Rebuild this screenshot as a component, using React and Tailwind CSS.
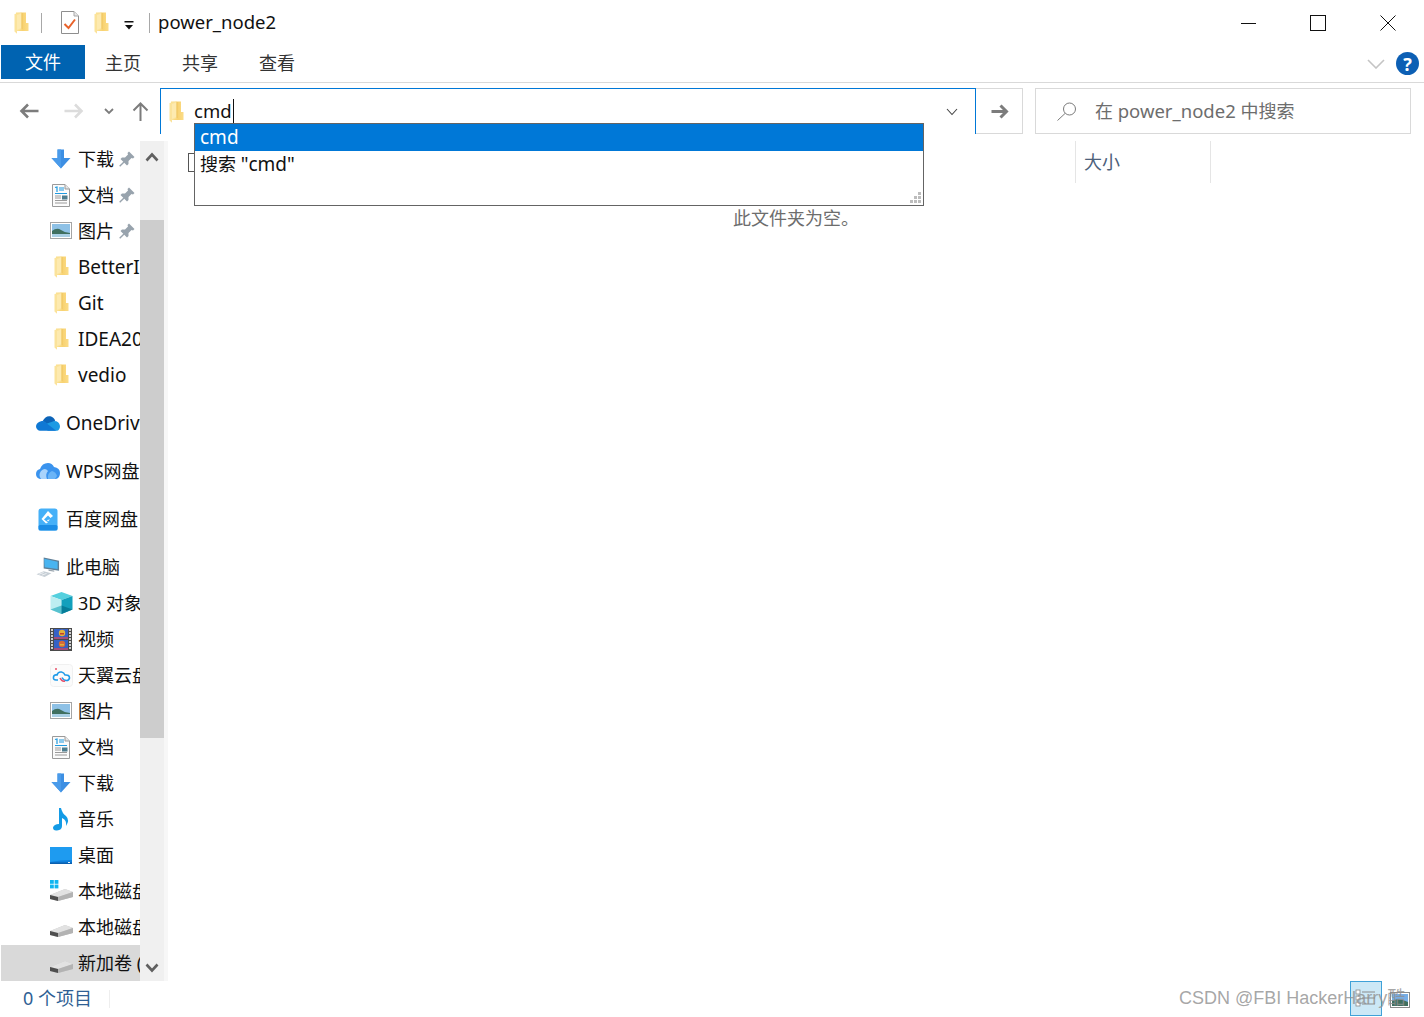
import React from "react";

const Folder = ({ id = "f" }) => (
  <svg width="15" height="22" viewBox="0 0 15 22">
    <defs>
      <linearGradient id={id} x1="0" x2="1" y1="0" y2="0">
        <stop offset="0" stopColor="#fbe08f" />
        <stop offset="0.55" stopColor="#f8d271" />
        <stop offset="1" stopColor="#fbdc88" />
      </linearGradient>
    </defs>
    <path d="M2 0.5 H12 V11 H14.5 V19 H2 Z" fill={`url(#${id})`} />
    <path d="M0.5 2 L8 0.5 V17 L3 19 V21.8 L0.5 19.5 Z" fill="#fbe39b" />
    <path d="M3 3 L7 1.5 V16 L3 18 Z" fill="#fdeab0" />
    <path d="M8 1 V17" stroke="#edc35e" strokeWidth="1" />
  </svg>
);

const Down = () => (
  <svg width="20" height="20" viewBox="0 0 20 20">
    <path d="M6.5 0.5 H13 V9 H19.5 L10 19.5 L0.5 9 H6.5 Z" fill="#3d8fe3" />
    <path d="M6.5 0.5 H10 V19.5 L0.5 9 H6.5 Z" fill="#4a9bea" />
  </svg>
);
const Doc = () => (
  <svg width="18" height="23" viewBox="0 0 18 23">
    <path d="M.5.5 H13 L17.5 5 V22.5 H.5 Z" fill="#fbfbfb" stroke="#9a9a9a" />
    <path d="M13 .5 V5 H17.5" fill="#e6e6e6" stroke="#9a9a9a" />
    <path d="M3 3.5 L5 3 V8 M7 4 H12 M7 6 H12 M3 9.5 H15" stroke="#1f9ae0" strokeWidth="1.2" fill="none" />
    <path d="M3 12 H9 M3 14 H9 M3 16.5 H15 M3 19 H15" stroke="#9a9a9a" fill="none" />
    <rect x="10" y="11.5" width="5.5" height="4" fill="#4e7d8e" />
  </svg>
);
const Pic = () => (
  <svg width="22" height="18" viewBox="0 0 22 18">
    <rect x=".5" y=".5" width="21" height="16" fill="#fff" stroke="#a5a5a5" />
    <rect x="2" y="2" width="18" height="13" fill="#8ec1e6" />
    <path d="M2 9 Q7 5 11 8 Q15 11 20 11 V15 H2 Z" fill="#3f6f5f" />
    <path d="M2 12 H20 V15 H2 Z" fill="#a9cfe4" />
  </svg>
);
const Pin = () => (
  <svg width="16" height="16" viewBox="0 0 16 16">
    <path d="M10 0.5 L15.5 6 L14 7.5 L12.5 7 L9.5 10 L9.5 13 L8 14.5 L1.5 8 L3 6.5 L6 6.5 L9 3.5 L8.5 2 Z" fill="#98a3ad" />
    <path d="M5 11 L0.7 15.3" stroke="#98a3ad" strokeWidth="1.4" />
  </svg>
);
const OneDrive = () => (
  <svg width="25" height="17" viewBox="0 0 25 17">
    <path d="M7 6 Q10 0 15 1 Q19 2 20 6 L12 11 Z" fill="#0c64b8" />
    <path d="M19 6 Q24 6 25 11 Q25 15 22 16 H12 L10 9 Z" fill="#1c9ae3" />
    <path d="M6 6 Q9 5 12 9 L21 16 H4 Q0 15 0 11 Q1 7 6 6 Z" fill="#0f78d4" />
  </svg>
);
const Wps = () => (
  <svg width="24" height="16" viewBox="0 0 24 16">
    <path d="M4 16 Q0 15 0 11 Q0 7 4 6 Q6 0 12 0 Q16 0 18 4 Q24 5 24 10 Q24 15 20 16 Z" fill="#3a93ee" />
    <path d="M5 16 Q2 12 5 8 Q9 4 12 8 Q9 11 11 16 Z" fill="#a9d3fb" />
    <path d="M12 16 Q11 10 16 8 Q20 9 21 13 L19 16 Z" fill="#6ab4f7" />
  </svg>
);
const Baidu = () => (
  <svg width="20" height="23" viewBox="0 0 20 23">
    <rect x=".5" y=".5" width="19" height="22" rx="2.5" fill="#45b0f8" />
    <rect x=".5" y="17" width="19" height="5.5" rx="1.5" fill="#1b8de6" />
    <path d="M10 3 L15 8 L12.5 10 L10 7.5 L6 11.5 L10 14.5 L8 15.5 L3.5 11 Z M12 11.5 L10 13.5 L9 12 Z" fill="#fff" />
  </svg>
);
const Pc = () => (
  <svg width="25" height="21" viewBox="0 0 25 21">
    <path d="M8 0 L24 3.5 V14 L8 11.5 Z" fill="#5f7e96" />
    <path d="M8.5 1.5 L22.5 4.5 V12 L9 10.2 Z" fill="#49b4f0" />
    <path d="M13 12.5 L19 13.5 V15 L13 14 Z" fill="#9aa5ae" />
    <path d="M0.5 17.5 L8 14.5 L16 16.5 L9 20.5 Z" fill="#c6ced5" />
    <path d="M3 17.5 L8 15.7 M6 18.5 L11 16.7" stroke="#eef1f4" />
  </svg>
);
const Cube = () => (
  <svg width="23" height="22" viewBox="0 0 23 22">
    <path d="M11.5 0 L22.5 4 L11.5 8 L0.5 4 Z" fill="#55d0de" />
    <path d="M0.5 4 L11.5 8 V22 L0.5 17.5 Z" fill="#bdeef1" />
    <path d="M22.5 4 L11.5 8 V22 L22.5 17.5 Z" fill="#12a0bc" />
    <path d="M0.5 17.5 L11.5 13.5 V22 Z" fill="#58c2cf" />
    <path d="M22.5 17.5 L11.5 13.5 V22 Z" fill="#067e99" />
  </svg>
);
const Film = () => (
  <svg width="22" height="23" viewBox="0 0 22 23">
    <rect width="22" height="23" fill="#4a4a4a" />
    <g fill="#cfcfcf">
      {[1, 4, 7, 10, 13, 16, 19].map((y) => (
        <React.Fragment key={y}>
          <rect x="1" y={y} width="2" height="2" />
          <rect x="19" y={y} width="2" height="2" />
        </React.Fragment>
      ))}
    </g>
    <rect x="4" y="1" width="14" height="10" fill="#3561c6" />
    <rect x="4" y="12" width="14" height="10" fill="#3561c6" />
    <circle cx="12" cy="5" r="3.2" fill="#e2b23c" />
    <rect x="10" y="5" width="4" height="1.5" fill="#c33f2e" />
    <circle cx="12" cy="16" r="3.2" fill="#d76b3a" />
    <rect x="10" y="16" width="4" height="1.5" fill="#e2b23c" />
    <rect x="4" y="9" width="14" height="2" fill="#a24d7c" />
    <rect x="4" y="20" width="14" height="2" fill="#a24d7c" />
  </svg>
);
const Tianyi = () => (
  <svg width="23" height="23" viewBox="0 0 23 23">
    <rect x=".5" y=".5" width="22" height="22" rx="3" fill="#fbfbfb" stroke="#f0f0f0" />
    <circle cx="6" cy="5" r="1" fill="#e8506a" />
    <path d="M8 16 H6 Q3 16 3.5 13 Q4 10.5 7 11 Q8 7.5 11.5 8 Q14 8.5 15 11 Q19.5 10.5 19.5 14 Q19 16.5 16.5 16.5 Q13.5 16.5 12 13.5" fill="none" stroke="#1f9ae8" strokeWidth="1.6" />
    <path d="M10 14 Q12 18 15 17" fill="none" stroke="#e8506a" strokeWidth="1.6" />
  </svg>
);
const Music = () => (
  <svg width="18" height="23" viewBox="0 0 18 23">
    <path d="M7 0 H9 Q10 5 14 8 Q18 12 14 18 Q15 12 10 10 V18 Q10 22 5 22.5 Q1 23 1 19.5 Q2 16 7 16 Z" fill="#139be6" />
  </svg>
);
const Desk = () => (
  <svg width="22" height="17" viewBox="0 0 22 17">
    <rect width="22" height="17" fill="#0f80dc" />
    <path d="M0 0 H22 V13 Q10 13 0 15 Z" fill="#1e9bf0" />
    <rect y="15.5" width="22" height="1.5" fill="#0a5fae" />
    <rect x="18" y="15" width="2" height="1" fill="#e6f4ff" />
  </svg>
);
const Disk = ({ win }) => (
  <svg width="23" height="22" viewBox="0 0 23 22">
    {win && (
      <g fill="#10b5f0">
        <rect x="0" y="0" width="3.8" height="3.8" />
        <rect x="4.6" y="0" width="3.8" height="3.8" />
        <rect x="0" y="4.6" width="3.8" height="3.8" />
        <rect x="4.6" y="4.6" width="3.8" height="3.8" />
      </g>
    )}
    <path d="M0 15 L15 9 L23 12 V17 L8 21 L0 19 Z" fill="#c9c9c9" />
    <path d="M0 15 L8 17 L23 12 L15 9 Z" fill="#e2e2e2" />
    <path d="M0 15 L8 17 V21 L0 19 Z" fill="#4f4f4f" />
    <path d="M8 17 L23 12 V17 L8 21 Z" fill="#b3b3b3" />
  </svg>
);

const rows = [
  { t: "下载", i: <Down />, l: 2, pin: 1 },
  { t: "文档", i: <Doc />, l: 2, pin: 1 },
  { t: "图片", i: <Pic />, l: 2, pin: 1 },
  { t: "BetterIntelliJ", i: <Folder id="a1" />, l: 2, latin: 1 },
  { t: "Git", i: <Folder id="a2" />, l: 2, latin: 1 },
  { t: "IDEA2020", i: <Folder id="a3" />, l: 2, latin: 1 },
  { t: "vedio", i: <Folder id="a4" />, l: 2, latin: 1 },
  { t: "OneDrive", i: <OneDrive />, l: 1, gap: 1, latin: 1 },
  { t: "WPS网盘", i: <Wps />, l: 1, gap: 1 },
  { t: "百度网盘", i: <Baidu />, l: 1, gap: 1 },
  { t: "此电脑", i: <Pc />, l: 1, gap: 1 },
  { t: "3D 对象", i: <Cube />, l: 2 },
  { t: "视频", i: <Film />, l: 2 },
  { t: "天翼云盘", i: <Tianyi />, l: 2 },
  { t: "图片", i: <Pic />, l: 2 },
  { t: "文档", i: <Doc />, l: 2 },
  { t: "下载", i: <Down />, l: 2 },
  { t: "音乐", i: <Music />, l: 2 },
  { t: "桌面", i: <Desk />, l: 2 },
  { t: "本地磁盘 (C:)", i: <Disk win />, l: 2 },
  { t: "本地磁盘 (D:)", i: <Disk />, l: 2 },
  { t: "新加卷 (E:)", i: <Disk />, l: 2, sel: 1 },
];

const NavRow = ({ r }) => (
  <div
    className={`flex h-9 shrink-0 items-center overflow-hidden whitespace-nowrap ${r.l === 1 ? "pl-[35px]" : "pl-[48px]"} ${r.gap ? "mt-3" : ""} ${r.sel ? "bg-[#d9d9d9]" : ""}`}
  >
    <span className="flex w-[24px] shrink-0 items-center justify-center">{r.i}</span>
    <span className={`text-[#111] ${r.latin ? "text-[19px]" : "text-[18px]"} ${r.l === 1 ? "ml-[6px]" : "ml-[5px]"}`}>{r.t}</span>
    {r.pin && (
      <span className="ml-[5px] shrink-0">
        <Pin />
      </span>
    )}
  </div>
);

const Chevron = ({ up }) => (
  <svg width="14" height="10" viewBox="0 0 14 10">
    <path d={up ? "M1.5 8.5 L7 2.5 L12.5 8.5" : "M1.5 1.5 L7 7.5 L12.5 1.5"} fill="none" stroke="#606060" strokeWidth="2.6" />
  </svg>
);

export default function App() {
  return (
    <div className="relative flex h-[1017px] w-[1424px] flex-col overflow-hidden bg-white font-['Noto_Sans','Noto_Sans_CJK_SC',sans-serif] text-[#111]">
      {/* title bar */}
      <div className="flex h-[45px] shrink-0 items-center">
        <span className="ml-[14px] flex"><Folder id="t1" /></span>
        <span className="ml-[12px] h-[20px] w-px bg-[#a8a8a8]" />
        <svg className="ml-[19px]" width="18" height="23" viewBox="0 0 18 23">
          <path d="M.5.5 H13 L17.5 5 V22.5 H.5 Z" fill="#fff" stroke="#8e8e8e" />
          <path d="M13 .5 V5 H17.5" fill="#e8e8e8" stroke="#a8a8a8" />
          <path d="M3.5 13 L7.5 17 L14 8.5" fill="none" stroke="#e8622a" strokeWidth="2" />
        </svg>
        <span className="ml-[15px] flex"><Folder id="t2" /></span>
        <svg className="ml-[15px] mt-[6px]" width="10" height="9" viewBox="0 0 10 9">
          <rect x="0.5" y="0" width="9" height="1.5" fill="#111" />
          <path d="M1 4 H9 L5 8.5 Z" fill="#111" />
        </svg>
        <span className="ml-[15px] h-[20px] w-px bg-[#a8a8a8]" />
        <span className="ml-[8px] text-[18.5px] leading-none">power_node2</span>
        <div className="ml-auto flex pr-px">
          <span className="flex h-[45px] w-[70px] items-center justify-center">
            <svg width="16" height="16" viewBox="0 0 16 16"><path d="M1 8.5 H16" stroke="#111" /></svg>
          </span>
          <span className="flex h-[45px] w-[70px] items-center justify-center">
            <svg width="16" height="16" viewBox="0 0 16 16"><rect x=".5" y=".5" width="15" height="15" fill="none" stroke="#111" /></svg>
          </span>
          <span className="flex h-[45px] w-[70px] items-center justify-center">
            <svg width="16" height="16" viewBox="0 0 16 16"><path d="M.5.5 L15.5 15.5 M15.5.5 L.5 15.5" stroke="#111" /></svg>
          </span>
        </div>
      </div>

      {/* ribbon tabs */}
      <div className="flex h-[38px] shrink-0 items-start border-b border-[#d9d9d9] text-[18px]">
        <div className="ml-px flex h-[34px] w-[84px] items-center justify-center bg-[#0063b1] text-white">文件</div>
        <div className="ml-[20px] flex h-[37px] items-center gap-[41px] text-[#333]">
          <span>主页</span>
          <span>共享</span>
          <span>查看</span>
        </div>
        <div className="ml-auto flex h-[37px] items-center pr-[5px]">
          <svg width="18" height="10" viewBox="0 0 18 10">
            <path d="M1 1 L9 9 L17 1" fill="none" stroke="#c4c4c4" strokeWidth="1.6" />
          </svg>
          <span className="ml-[11px] flex h-[23px] w-[23px] items-center justify-center rounded-full bg-[#0c5fb4] text-[18px] font-bold leading-none text-white">?</span>
        </div>
      </div>

      {/* nav row */}
      <div className="flex h-[58px] shrink-0 items-start pt-[5px]">
        <div className="flex h-[46px] w-[160px] shrink-0 items-center">
          <svg className="ml-[19px]" width="20" height="16" viewBox="0 0 20 16">
            <path d="M19.5 8 H3 M9 1.5 L2.5 8 L9 14.5" fill="none" stroke="#7c7c7c" strokeWidth="2.6" />
          </svg>
          <svg className="ml-[25px]" width="20" height="16" viewBox="0 0 20 16">
            <path d="M.5 8 H17 M11 1.5 L17.5 8 L11 14.5" fill="none" stroke="#dcdcdc" strokeWidth="2.6" />
          </svg>
          <svg className="ml-[20px]" width="10" height="7" viewBox="0 0 10 7">
            <path d="M1 1 L5 5 L9 1" fill="none" stroke="#7c7c7c" strokeWidth="1.8" />
          </svg>
          <svg className="ml-[18px]" width="17" height="19" viewBox="0 0 17 19">
            <path d="M8.5 19 V2 M1.5 8.5 L8.5 1.5 L15.5 8.5" fill="none" stroke="#7c7c7c" strokeWidth="2" />
          </svg>
        </div>
        <div className="flex h-[46px] w-[816px] shrink-0 items-center border-x border-t border-[#0078d7] pl-[8px]">
          <Folder id="n1" />
          <span className="ml-[10px] text-[18.5px] leading-none">cmd</span>
          <span className="ml-[1px] h-[25px] w-px bg-[#111]" />
          <svg className="ml-auto mr-[17px]" width="12" height="8" viewBox="0 0 12 8">
            <path d="M1 1 L6 6.5 L11 1" fill="none" stroke="#444" strokeWidth="1.1" />
          </svg>
        </div>
        <div className="flex h-[46px] w-[47px] shrink-0 items-center justify-center border-y border-r border-[#d9d9d9] pl-[2px]">
          <svg width="18" height="15" viewBox="0 0 18 15">
            <path d="M.5 7.5 H15 M9.5 1.5 L15.5 7.5 L9.5 13.5" fill="none" stroke="#7c7c7c" strokeWidth="3" />
          </svg>
        </div>
        <div className="ml-[12px] flex h-[46px] w-[376px] shrink-0 items-center border border-[#d9d9d9] pl-[21px] text-[18px] text-[#6d6d6d]">
          <svg width="20" height="19" viewBox="0 0 20 19">
            <circle cx="12.5" cy="7" r="6" fill="none" stroke="#7a7a7a" />
            <path d="M8 11.5 L.5 18.5" stroke="#7a7a7a" />
          </svg>
          <span className="ml-[18px]">在 <span className="text-[18.5px]">power_node2</span> 中搜索</span>
        </div>
      </div>

      {/* body */}
      <div className="flex min-h-0 flex-1">
        <div className="ml-px flex w-[139px] shrink-0 flex-col overflow-hidden">
          {rows.map((r, i) => (
            <NavRow key={i} r={r} />
          ))}
        </div>
        <div className="flex w-[24px] shrink-0 flex-col bg-[#f0f0f0]">
          <div className="flex h-[79px] shrink-0 justify-center pt-[11px]">
            <Chevron up />
          </div>
          <div className="h-[518px] shrink-0 bg-[#cdcdcd]" />
          <div className="flex flex-1 items-end justify-center pb-[8px]">
            <Chevron />
          </div>
        </div>
        <div className="w-[4px] shrink-0 bg-[#f7f7f7]" />
        <div className="min-w-0 flex-1">
          <div className="flex h-[42px] items-center">
            <span className="ml-[20px] h-[19px] w-[14px] border border-[#555]" />
            <div className="ml-[873px] flex h-full w-[136px] items-center border-x border-[#e5e5e5] pl-[8px] text-[18px] text-[#4c607a]">大小</div>
          </div>
          <div className="mt-[22px] text-center text-[18px] leading-[26px] text-[#6d6d6d]">此文件夹为空。</div>
        </div>
      </div>

      {/* status */}
      <div className="flex h-[36px] shrink-0 items-start">
        <span className="ml-[23px] mt-[4px] text-[18px] text-[#2f5f94]">0 个项目</span>
        <span className="ml-[17px] mt-[9px] h-[18px] w-px bg-[#eeeeee]" />
        <div className="ml-auto flex items-center pr-[14px]">
          <span className="flex h-[35px] w-[32px] items-center justify-center border border-[#3fa1d8] bg-[#cce8f6]">
            <svg width="22" height="22" viewBox="0 0 22 22">
              <g fill="#fff" stroke="#8a8a8a" strokeWidth=".8">
                <rect x="1" y="2" width="4" height="4" />
                <rect x="1" y="8" width="4" height="4" />
                <rect x="1" y="14" width="4" height="4" />
              </g>
              <path d="M7 4 H20 M7 10 H20 M7 16 H20" stroke="#8a8a8a" />
            </svg>
          </span>
          <svg className="ml-[8px]" width="20" height="20" viewBox="0 0 20 20">
            <rect x=".5" y="3.5" width="19" height="15" fill="#fff" stroke="#8a8a8a" />
            <rect x="2" y="5" width="16" height="12" fill="#77aee6" />
            <path d="M2 12 Q8 8 18 13 V17 H2 Z" fill="#3f6f5f" />
          </svg>
        </div>
      </div>

      {/* autocomplete popup */}
      <div className="absolute left-[194px] top-[123px] h-[83px] w-[730px] border border-[#646464] bg-white text-[18px] leading-[27px]">
        <div className="h-[27px] bg-[#0078d7] pl-[5px] text-[19px] text-white">cmd</div>
        <div className="h-[27px] pl-[5px] text-[#111]">搜索 <span className="text-[19px]">"cmd"</span></div>
        <svg className="absolute bottom-[2px] right-[2px]" width="11" height="11" viewBox="0 0 11 11">
          <g fill="#bdbdbd">
            <rect x="8" y="0" width="3" height="3" />
            <rect x="4" y="4" width="3" height="3" />
            <rect x="8" y="4" width="3" height="3" />
            <rect x="0" y="8" width="3" height="3" />
            <rect x="4" y="8" width="3" height="3" />
            <rect x="8" y="8" width="3" height="3" />
          </g>
        </svg>
      </div>

      {/* watermark */}
      <div className="absolute left-[1179px] top-[986px] whitespace-nowrap font-['Liberation_Sans','Noto_Sans_CJK_SC',sans-serif] text-[18px] leading-[24px] text-[#8f8f8f]/80">
        CSDN @FBI HackerHarry酷
      </div>
    </div>
  );
}
